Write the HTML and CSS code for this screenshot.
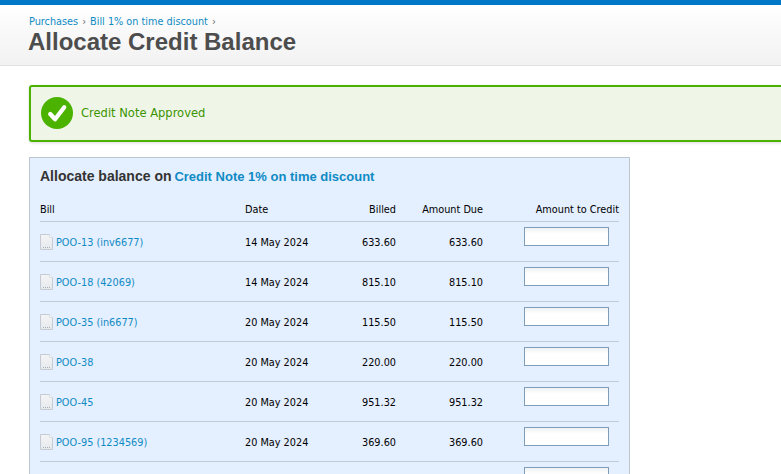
FILE: index.html
```html
<!DOCTYPE html>
<html lang="en">
<head>
<meta charset="utf-8">
<title>Allocate Credit Balance</title>
<link rel="stylesheet" href="styles.css">
</head>
<body>
<svg class="defs" width="0" height="0" aria-hidden="true">
  <defs>
    <linearGradient id="sheet" x1="0" y1="0" x2="0" y2="1"><stop offset="0" stop-color="#f3f4f6"/><stop offset="1" stop-color="#e6e9ec"/></linearGradient>
  </defs>
  <symbol id="doc" viewBox="0 0 13 16">
    <path d="M.5.5h9l3 3v12H.5z" fill="url(#sheet)" stroke="#c4cbd3"/>
    <path d="M9.5.5v3h3" fill="#fafbfb" stroke="#dcdfe4"/>
    <path d="M3 13.5h7" stroke="#a9afb6" stroke-dasharray="1 1"/>
  </symbol>
</svg>
<header class="page-head">
  <nav class="crumbs"><a href="#">Purchases</a><span class="sep">›</span><a href="#">Bill 1% on time discount</a><span class="sep">›</span></nav>
  <h1>Allocate Credit Balance</h1>
</header>
<main class="content">
  <div class="notice">
    <svg class="tick" width="32" height="32" viewBox="0 0 33 33" aria-hidden="true"><circle cx="16.5" cy="16.5" r="16.5" fill="#4cb200"/><path d="M9.5 17.5l5 5.5 9.5-12.5" fill="none" stroke="#fff" stroke-width="4.4" stroke-linecap="round" stroke-linejoin="round"/></svg>
    <span class="notice-text">Credit Note Approved</span>
  </div>
  <section class="panel">
    <h2>Allocate balance on <a href="#">Credit Note 1% on time discount</a></h2>
    <table>
      <thead>
        <tr><th class="c-bill">Bill</th><th class="c-date">Date</th><th class="c-num c-billed">Billed</th><th class="c-num c-due">Amount Due</th><th class="c-num c-credit">Amount to Credit</th></tr>
      </thead>
      <tbody>
        <tr><td><span class="bill"><svg class="doc" width="13" height="16"><use href="#doc"/></svg><a href="#">POO-13 (inv6677)</a></span></td><td>14 May 2024</td><td class="c-num">633.60</td><td class="c-num">633.60</td><td class="c-input"><input type="text"></td></tr>
        <tr><td><span class="bill"><svg class="doc" width="13" height="16"><use href="#doc"/></svg><a href="#">POO-18 (42069)</a></span></td><td>14 May 2024</td><td class="c-num">815.10</td><td class="c-num">815.10</td><td class="c-input"><input type="text"></td></tr>
        <tr><td><span class="bill"><svg class="doc" width="13" height="16"><use href="#doc"/></svg><a href="#">POO-35 (in6677)</a></span></td><td>20 May 2024</td><td class="c-num">115.50</td><td class="c-num">115.50</td><td class="c-input"><input type="text"></td></tr>
        <tr><td><span class="bill"><svg class="doc" width="13" height="16"><use href="#doc"/></svg><a href="#">POO-38</a></span></td><td>20 May 2024</td><td class="c-num">220.00</td><td class="c-num">220.00</td><td class="c-input"><input type="text"></td></tr>
        <tr><td><span class="bill"><svg class="doc" width="13" height="16"><use href="#doc"/></svg><a href="#">POO-45</a></span></td><td>20 May 2024</td><td class="c-num">951.32</td><td class="c-num">951.32</td><td class="c-input"><input type="text"></td></tr>
        <tr><td><span class="bill"><svg class="doc" width="13" height="16"><use href="#doc"/></svg><a href="#">POO-95 (1234569)</a></span></td><td>20 May 2024</td><td class="c-num">369.60</td><td class="c-num">369.60</td><td class="c-input"><input type="text"></td></tr>
        <tr><td></td><td></td><td></td><td></td><td class="c-input"><input type="text"></td></tr>
      </tbody>
    </table>
  </section>
</main>
</body>
</html>
```

FILE: styles.css
```css
html, body {
  margin: 0;
  height: 100%;
  overflow: hidden;
  background: #fff;
}
body {
  font-family: "DejaVu Sans Condensed", "Noto Sans", sans-serif;
  font-size: 10.8px;
  color: #000;
  border-top: 5px solid #0078c8;
  box-sizing: border-box;
}
a {
  color: #0f8bc4;
  text-decoration: none;
}
.defs {
  display: block;
  height: 0;
}
.page-head {
  height: 61px;
  box-sizing: border-box;
  padding: 10px 29px 0;
  background: linear-gradient(#fff, #f2f2f2);
  border-bottom: 1px solid #e3e3e3;
}
.crumbs {
  height: 13px;
  line-height: 14px;
}
.sep {
  margin: 0 4px;
  color: #666;
}
h1 {
  margin: 0 0 0 -1px;
  font: bold 24px/28px "Liberation Sans", sans-serif;
  color: #4d4d4d;
}
.content {
  padding: 19px 0 0 29px;
}
.notice {
  width: 800px;
  height: 57px;
  box-sizing: border-box;
  display: flex;
  align-items: center;
  gap: 8px;
  padding: 0 0 1px 10px;
  background: #eff6e8;
  border: 2px solid #4cb200;
  border-radius: 3px;
  box-shadow: 0 1px 3px rgba(0, 0, 0, .15);
  font-size: 12.8px;
  color: #3d9400;
}
.notice-text {
  margin-bottom: 2px;
}
.panel {
  width: 601px;
  box-sizing: border-box;
  margin-top: 15px;
  padding: 9px 10px 0;
  background: #e4efff;
  border: 1px solid #bdc6d0;
}
h2 {
  margin: 0;
  font: bold 14px/18px "Liberation Sans", sans-serif;
  color: #333;
}
h2 a {
  font-size: 13px;
  margin-left: -1px;
}
table {
  width: 579px;
  margin-top: 9px;
  border-collapse: collapse;
  table-layout: fixed;
}
th {
  height: 24px;
  padding: 2px 0 0;
  font-weight: normal;
  text-align: left;
  border-bottom: 1px solid #c3c9d3;
}
td {
  height: 37px;
  padding: 2px 0 0;
  border-bottom: 1px solid #c3c9d3;
}
.c-bill { width: 205px; }
.c-date { width: 100px; }
.c-billed { width: 51px; }
.c-due { width: 87px; }
.c-credit { width: 136px; }
th.c-num, td.c-num {
  text-align: right;
}
.bill {
  display: flex;
  align-items: center;
  gap: 3px;
}
.doc {
  flex: none;
  margin-bottom: 2px;
}
td.c-input {
  height: 39px;
  padding: 0 10px 0 0;
  text-align: right;
  vertical-align: top;
}
input {
  display: block;
  width: 85px;
  height: 19px;
  box-sizing: border-box;
  margin: 5px 0 0 auto;
  border: 1px solid #7f9db9;
  background: linear-gradient(#eff3f3, #fff 35%);
  padding: 0 2px;
}
```
